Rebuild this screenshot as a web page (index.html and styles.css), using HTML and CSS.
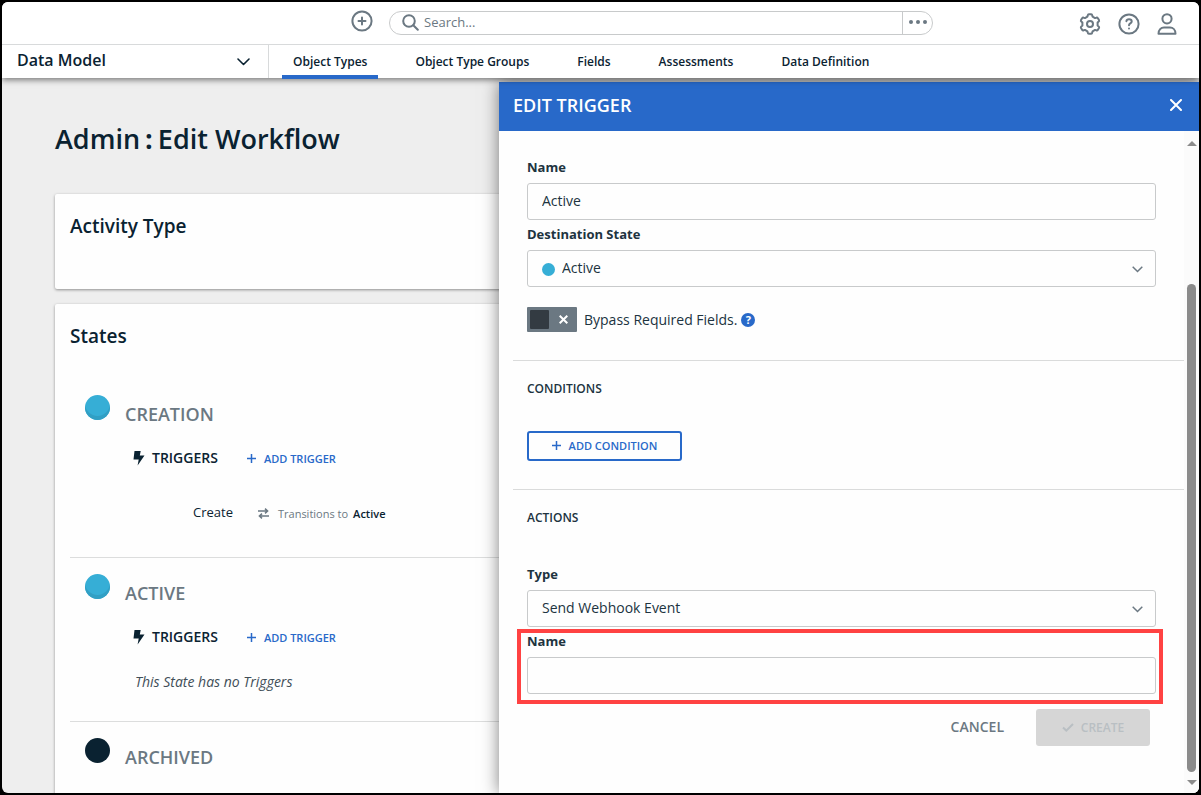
FILE: index.html
```html
<!DOCTYPE html>
<html lang="en">
<head>
    <meta charset="utf-8">
    <meta name="viewport" content="width=device-width, initial-scale=1.0">
    <title>Admin: Edit Workflow</title>
    <link rel="stylesheet" href="styles.css">
</head>
<body>
    <div class="app">
        <header class="topbar">
            <div class="brand"></div>
            <button class="icon-btn add-btn" aria-label="Add">
                <svg width="22" height="22" viewBox="0 0 22 22" fill="none" stroke="currentColor" stroke-width="2" stroke-linecap="round"><circle cx="11" cy="11" r="9.6"/><path d="M11 7.500v7M7.500 11h7"/></svg>
            </button>
            <div class="search">
                <svg class="search-icon" width="17" height="17" viewBox="0 0 17 17" fill="none" stroke="currentColor" stroke-width="2" stroke-linecap="round"><circle cx="7" cy="7" r="5.800"/><path d="M11.300 11.300l4.500 4.500"/></svg>
                <input type="text" class="search-input" placeholder="Search..." aria-label="Search">
                <button class="search-more" aria-label="More search options">
                    <svg width="18" height="4" viewBox="0 0 18 4" fill="currentColor"><circle cx="2" cy="2" r="2"/><circle cx="9" cy="2" r="2"/><circle cx="16" cy="2" r="2"/></svg>
                </button>
            </div>
            <div class="tools">
                <button class="icon-btn" aria-label="Settings">
                    <svg width="22" height="22" viewBox="0 0 22 22" fill="none" stroke="currentColor" stroke-width="2" stroke-linejoin="round"><circle cx="11" cy="11" r="3"/><path d="M9.900 1.300h2.200Q13.100 1.300 13.200 2.300L13.600 3.700 16 5.100 17.300 4.700Q18.350 4.330 18.900 5.300L20 7.100Q20.450 7.970 19.700 8.600L18.600 9.600V12.400L19.700 13.400Q20.450 14.030 20 14.900L18.900 16.700Q18.350 17.670 17.300 17.300L16 16.900 13.600 18.300 13.200 19.700Q13.100 20.700 12.100 20.700H9.900Q8.900 20.700 8.800 19.700L8.400 18.300 6 16.900 4.700 17.300Q3.650 17.670 3.100 16.700L2 14.900Q1.550 14.030 2.300 13.400L3.400 12.400V9.600L2.300 8.600Q1.550 7.970 2 7.100L3.100 5.300Q3.650 4.330 4.700 4.700L6 5.100 8.400 3.700 8.800 2.300Q8.900 1.300 9.900 1.300z"/></svg>
                </button>
                <button class="icon-btn" aria-label="Help">
                    <svg width="22" height="22" viewBox="0 0 22 22" fill="none" stroke="currentColor" stroke-width="2" stroke-linecap="round" stroke-linejoin="round"><circle cx="11" cy="11" r="9.6"/><path d="M8.400 8.200C8.600 6.800 9.700 6.300 11 6.300c1.500 0 2.700.8 2.700 2.200 0 1.900-2.700 1.900-2.700 3.700"/><path d="M11 15.500v.1"/></svg>
                </button>
                <button class="icon-btn" aria-label="Account">
                    <svg width="20" height="22" viewBox="0 0 20 22" fill="none" stroke="currentColor" stroke-width="2" stroke-linejoin="round"><circle cx="10" cy="5.800" r="4.600"/><path d="M1.500 20.800c0-4 2.500-6.300 5.500-6.300h6c3 0 5.500 2.300 5.500 6.300z"/></svg>
                </button>
            </div>
        </header>

        <nav class="navbar">
            <div class="area-picker">
                <select class="area-select" aria-label="Area">
                    <option>Data Model</option>
                </select>
                <svg class="area-arrow" width="13" height="8" viewBox="0 0 13 8" fill="none" stroke="currentColor" stroke-width="1.600" stroke-linecap="round" stroke-linejoin="round"><path d="M1 1l5.500 5.500L12 1"/></svg>
            </div>
            <div class="tabs">
                <a href="#" class="tab active">Object Types</a>
                <a href="#" class="tab">Object Type Groups</a>
                <a href="#" class="tab">Fields</a>
                <a href="#" class="tab">Assessments</a>
                <a href="#" class="tab">Data Definition</a>
            </div>
        </nav>

        <div class="content">
            <main class="page">
                <h1>Admin<span class="colon">:</span>Edit Workflow</h1>

                <section class="card activity-card">
                    <h2>Activity Type</h2>
                </section>

                <section class="card states-card">
                    <h2>States</h2>

                    <div class="state">
                        <div class="state-head">
                            <span class="state-dot"></span>
                            <h3>CREATION</h3>
                        </div>
                        <div class="triggers">
                            <svg width="12" height="15" viewBox="0 0 12 15" fill="currentColor"><path d="M1.500 0h6.200L6.800 4.500h4.700L4.600 14.500l1.100-6H.5z"/></svg>
                            <h4>TRIGGERS</h4>
                            <button class="link-btn"><svg width="9" height="9" viewBox="0 0 9 9" stroke="currentColor" stroke-width="1.500"><path d="M4.500 0v9M0 4.500h9"/></svg>ADD TRIGGER</button>
                        </div>
                        <div class="trigger-row">
                            <a href="#" class="trigger-name">Create</a>
                            <div class="transition">
                                <svg width="11" height="11" viewBox="0 0 11 11" fill="none" stroke="currentColor" stroke-width="1.500"><path d="M0 3h9M7 .6L9.600 3 7 5.400M11 8H2M4 5.600L1.400 8 4 10.400"/></svg>
                                <span>Transitions to</span>
                                <strong>Active</strong>
                            </div>
                        </div>
                    </div>

                    <div class="state">
                        <div class="state-head">
                            <span class="state-dot"></span>
                            <h3>ACTIVE</h3>
                        </div>
                        <div class="triggers">
                            <svg width="12" height="15" viewBox="0 0 12 15" fill="currentColor"><path d="M1.500 0h6.200L6.800 4.500h4.700L4.600 14.500l1.100-6H.5z"/></svg>
                            <h4>TRIGGERS</h4>
                            <button class="link-btn"><svg width="9" height="9" viewBox="0 0 9 9" stroke="currentColor" stroke-width="1.500"><path d="M4.500 0v9M0 4.500h9"/></svg>ADD TRIGGER</button>
                        </div>
                        <p class="no-triggers">This State has no Triggers</p>
                    </div>

                    <div class="state">
                        <div class="state-head">
                            <span class="state-dot dark"></span>
                            <h3>ARCHIVED</h3>
                        </div>
                    </div>
                </section>
            </main>

            <aside class="drawer">
                <div class="drawer-head">
                    <h2>EDIT TRIGGER</h2>
                    <button class="close-btn" aria-label="Close">
                        <svg width="12" height="12" viewBox="0 0 12 12" stroke="currentColor" stroke-width="2" stroke-linecap="round"><path d="M1 1l10 10M11 1L1 11"/></svg>
                    </button>
                </div>
                <div class="drawer-body">
                    <form class="trigger-form">
                        <div class="section">
                            <div class="field">
                                <label for="triggerName">Name</label>
                                <input type="text" id="triggerName" class="control" value="Active">
                            </div>
                            <div class="field">
                                <label for="destination">Destination State</label>
                                <div class="select-wrap">
                                    <span class="small-dot"></span>
                                    <select id="destination" class="control with-dot">
                                        <option>Active</option>
                                    </select>
                                    <svg class="arrow" width="11" height="7" viewBox="0 0 11 7" fill="none" stroke="currentColor" stroke-width="1.500"><path d="M.7.7l4.800 4.800L10.300.7"/></svg>
                                </div>
                            </div>
                            <div class="bypass">
                                <label class="toggle" for="bypass">
                                    <input type="checkbox" id="bypass">
                                    <svg width="9" height="9" viewBox="0 0 9 9" stroke="currentColor" stroke-width="2"><path d="M.7.7l7.600 7.600M8.300.7L.7 8.300"/></svg>
                                </label>
                                <label for="bypass" class="bypass-label">Bypass Required Fields.</label>
                                <span class="help-dot">?</span>
                            </div>
                        </div>

                        <div class="section">
                            <h3>CONDITIONS</h3>
                            <button type="button" class="outline-btn"><svg width="9" height="9" viewBox="0 0 9 9" stroke="currentColor" stroke-width="1.500"><path d="M4.500 0v9M0 4.500h9"/></svg>ADD CONDITION</button>
                        </div>

                        <div class="section">
                            <h3>ACTIONS</h3>
                            <div class="field">
                                <label for="actionType">Type</label>
                                <div class="select-wrap">
                                    <select id="actionType" class="control">
                                        <option>Send Webhook Event</option>
                                    </select>
                                    <svg class="arrow" width="11" height="7" viewBox="0 0 11 7" fill="none" stroke="currentColor" stroke-width="1.500"><path d="M.7.7l4.800 4.800L10.300.7"/></svg>
                                </div>
                            </div>
                            <div class="field highlight">
                                <label for="actionName">Name</label>
                                <input type="text" id="actionName" class="control">
                            </div>
                            <div class="form-buttons">
                                <button type="button" class="cancel-btn">CANCEL</button>
                                <button type="submit" class="create-btn" disabled><svg width="12" height="9" viewBox="0 0 12 9" fill="none" stroke="currentColor" stroke-width="2"><path d="M1 4.500L4.300 7.600 11 1"/></svg>CREATE</button>
                            </div>
                        </div>
                    </form>
                    <div class="scrollbar">
                        <svg width="10" height="5" viewBox="0 0 10 5" fill="currentColor"><path d="M5 0l5 5H0z"/></svg>
                        <div class="track"><div class="thumb"></div></div>
                        <svg width="10" height="5" viewBox="0 0 10 5" fill="currentColor"><path d="M0 0h10L5 5z"/></svg>
                    </div>
                </div>
            </aside>
        </div>
    </div>
</body>
</html>
```
FILE: styles.css
```css
* {
    box-sizing: border-box;
}
body {
    margin: 0;
    padding: 2px;
    height: 100vh;
    background: #000;
    color: #0a2231;
    font-family: "Open Sans", "Noto Sans", sans-serif;
    font-size: 14px;
    line-height: 24px;
}
h1, h2, h3, h4, p {
    margin: 0;
    font-weight: 600;
}
button, input, select {
    font-family: inherit;
    color: inherit;
    margin: 0;
}
button {
    border: 0;
    padding: 0;
    background: none;
    cursor: pointer;
}
select {
    appearance: none;
}
a {
    color: inherit;
    text-decoration: none;
}
svg {
    display: block;
    flex: none;
}
.app {
    display: flex;
    flex-direction: column;
    height: 100%;
    overflow: hidden;
    border-radius: 6px;
    background: #eee;
}

/* top bar */
.topbar {
    display: flex;
    align-items: center;
    height: 43px;
    flex: none;
    background: #fff;
    border-bottom: 1px solid #d8dadb;
}
.brand {
    flex: 0 0 349px;
}
.icon-btn {
    color: #6b7882;
}
.add-btn {
    margin: 0 16px 4px 0;
}
.search {
    flex: 0 1 544px;
    display: flex;
    align-items: center;
    height: 24px;
    border: 1px solid #c8cacb;
    border-radius: 12px;
    color: #6b7882;
}
.search-icon {
    margin: 0 5px 2px 12px;
}
.search-input {
    flex: 1;
    min-width: 0;
    height: 22px;
    border: 0;
    padding: 0 0 2px;
    background: none;
    outline: none;
    font-size: 13px;
}
.search-input::placeholder {
    color: #6b7882;
}
.search-more {
    display: flex;
    align-items: center;
    justify-content: center;
    width: 30px;
    height: 22px;
    padding-bottom: 2px;
    border-left: 1px solid #c8cacb;
}
.tools {
    display: flex;
    gap: 17px;
    margin: 2px 22px 0 auto;
}

/* navigation */
.navbar {
    display: flex;
    flex: none;
    height: 33px;
    background: #fff;
    box-shadow: 0 2px 6px rgba(0, 0, 0, .5);
    clip-path: inset(0 0 -12px);
    position: relative;
    z-index: 3;
}
.area-picker {
    position: relative;
    flex: 0 0 267px;
    border-right: 1px solid #d8dadb;
}
.area-select {
    width: 100%;
    height: 30px;
    padding: 0 40px 0 15px;
    border: 0;
    background: none;
    font-size: 16px;
    font-weight: 600;
}
.area-arrow {
    position: absolute;
    right: 18px;
    top: 13px;
}
.tabs {
    display: flex;
    gap: 26px;
    margin-left: 13px;
}
.tab {
    height: 34px;
    padding: 0 11px;
    line-height: 33px;
    font-size: 12px;
    font-weight: 600;
    white-space: nowrap;
}
.tab.active {
    border-bottom: 4px solid #2869c9;
}

/* page */
.content {
    position: relative;
    flex: 1;
    min-height: 0;
    overflow: hidden;
}
.page {
    height: 100%;
    padding: 42px 53px 0;
    overflow: hidden;
}
.page h1 {
    font-size: 27px;
    line-height: 38px;
    margin-bottom: 36px;
}
.colon {
    padding: 0 5px;
    font-weight: 700;
}
.card {
    padding: 20px 15px;
    background: #fefefe;
    border-radius: 2px;
    box-shadow: 0 1px 3px rgba(0, 0, 0, .4);
}
.card h2 {
    font-size: 19px;
}
.activity-card {
    height: 95px;
    margin-bottom: 15px;
}
.states-card {
    min-height: 100%;
}
.states-card h2 {
    margin-bottom: 31px;
}
.state {
    padding: 16px 15px 0;
}
.state + .state {
    border-top: 1px solid #dcdddd;
}
.state-head {
    display: flex;
    gap: 15px;
}
.state-dot {
    width: 25px;
    height: 25px;
    border-radius: 50%;
    background: #36aed6;
    box-shadow: inset 0 -4px 0 #319fc4;
}
.state-dot.dark {
    background: #0a2231;
    box-shadow: none;
}
.state-head h3 {
    margin-top: 7px;
    color: #6b7882;
    font-size: 18px;
}
.triggers {
    display: flex;
    align-items: center;
    margin: 20px 0 0 48px;
}
.triggers h4 {
    margin: 0 29px 0 7px;
    font-size: 14px;
}
.link-btn {
    display: flex;
    align-items: center;
    gap: 8px;
    color: #2869c9;
    font-size: 11px;
    font-weight: 600;
}
.trigger-row {
    display: flex;
    align-items: center;
    padding: 30px 0 33px 108px;
}
.trigger-name {
    font-size: 13px;
}
.transition {
    display: flex;
    align-items: center;
    margin-left: 25px;
    padding-top: 3px;
    line-height: 21px;
    font-size: 11px;
}
.transition svg,
.transition span {
    color: #6b7882;
}
.transition span {
    margin: 0 5px 0 9px;
}
.transition strong {
    font-weight: 600;
}
.no-triggers {
    padding: 21px 0 27px 50px;
    color: #414e58;
    font-size: 14px;
    font-style: italic;
    font-weight: 400;
}

/* edit drawer */
.drawer {
    position: absolute;
    top: 4px;
    right: 0;
    bottom: 0;
    width: 700px;
    max-width: 100%;
    display: flex;
    flex-direction: column;
    background: #fefefe;
    color: #20333f;
    box-shadow: 0 0 16px rgba(0, 0, 0, .5);
}
.drawer-head {
    display: flex;
    flex: none;
    align-items: center;
    justify-content: space-between;
    height: 49px;
    padding: 0 17px 4px 14px;
    background: #2869c9;
    color: #fff;
}
.drawer-head h2 {
    font-size: 18px;
}
.drawer-body {
    display: flex;
    flex: 1;
    min-height: 0;
}
.trigger-form {
    flex: 1;
    min-width: 0;
    padding: 22px 0 0 14px;
    overflow: hidden;
}
.section {
    padding: 0 28px 28px 14px;
}
.section + .section {
    padding-top: 16px;
    border-top: 1px solid #dadbdb;
}
.section h3 {
    font-size: 12px;
}
.field {
    position: relative;
}
.field label {
    display: block;
    height: 30px;
    line-height: 28px;
    font-size: 13px;
    font-weight: 700;
}
.control {
    display: block;
    width: 100%;
    height: 37px;
    padding: 0 14px 2px;
    border: 1px solid #c8cacb;
    border-radius: 3px;
    background: #fefefe;
    font-size: 14px;
}
.select-wrap {
    position: relative;
}
.with-dot {
    padding-left: 34px;
}
.small-dot {
    position: absolute;
    left: 15px;
    top: 13px;
    width: 13px;
    height: 13px;
    border-radius: 50%;
    background: #36aed6;
}
.arrow {
    position: absolute;
    right: 13px;
    top: 16px;
    color: #6b7882;
}
.bypass {
    display: flex;
    align-items: center;
    margin-top: 20px;
    font-size: 14px;
}
.toggle {
    display: flex;
    align-items: center;
    gap: 10px;
    width: 50px;
    height: 25px;
    padding: 0 3px;
    border-radius: 1px;
    background: #6b7882;
    color: #fff;
}
.toggle input {
    appearance: none;
    width: 19px;
    height: 19px;
    border-radius: 1px;
    background: #333b42;
}
.bypass-label {
    margin: 0 4px 0 7px;
}
.help-dot {
    width: 14px;
    height: 14px;
    border-radius: 50%;
    background: #2869c9;
    color: #fff;
    font-size: 11px;
    font-weight: 700;
    line-height: 14px;
    text-align: center;
}
.outline-btn {
    display: flex;
    align-items: center;
    justify-content: center;
    gap: 8px;
    width: 155px;
    height: 30px;
    margin-top: 30px;
    padding-bottom: 2px;
    border: 2px solid #2869c9;
    border-radius: 3px;
    color: #2869c9;
    font-size: 11px;
    font-weight: 600;
}
.section h3 + .field {
    margin-top: 30px;
}
.highlight::after {
    content: "";
    position: absolute;
    top: 2px;
    right: -7px;
    bottom: -10px;
    left: -10px;
    border: 4px solid #ff4242;
    pointer-events: none;
}
.form-buttons {
    display: flex;
    justify-content: flex-end;
    gap: 32px;
    margin: 15px 6px 0 0;
}
.cancel-btn {
    padding-bottom: 2px;
    color: #6b7882;
    font-size: 14px;
    font-weight: 600;
}
.create-btn {
    display: flex;
    align-items: center;
    justify-content: center;
    gap: 7px;
    width: 114px;
    height: 37px;
    padding-bottom: 1px;
    border-radius: 3px;
    background: #d6d6d6;
    color: #b9bfc3;
    font-size: 12px;
    font-weight: 600;
}
.scrollbar {
    display: flex;
    flex-direction: column;
    align-items: center;
    flex: 0 0 15px;
    padding: 10px 0 8px;
    background: #fbfbfb;
    color: #8b8b8b;
}
.track {
    display: flex;
    flex-direction: column;
    justify-content: flex-end;
    flex: 1;
    padding: 8px 0;
}
.thumb {
    width: 9px;
    height: 79%;
    border-radius: 5px;
    background: #8b8b8b;
}
```
